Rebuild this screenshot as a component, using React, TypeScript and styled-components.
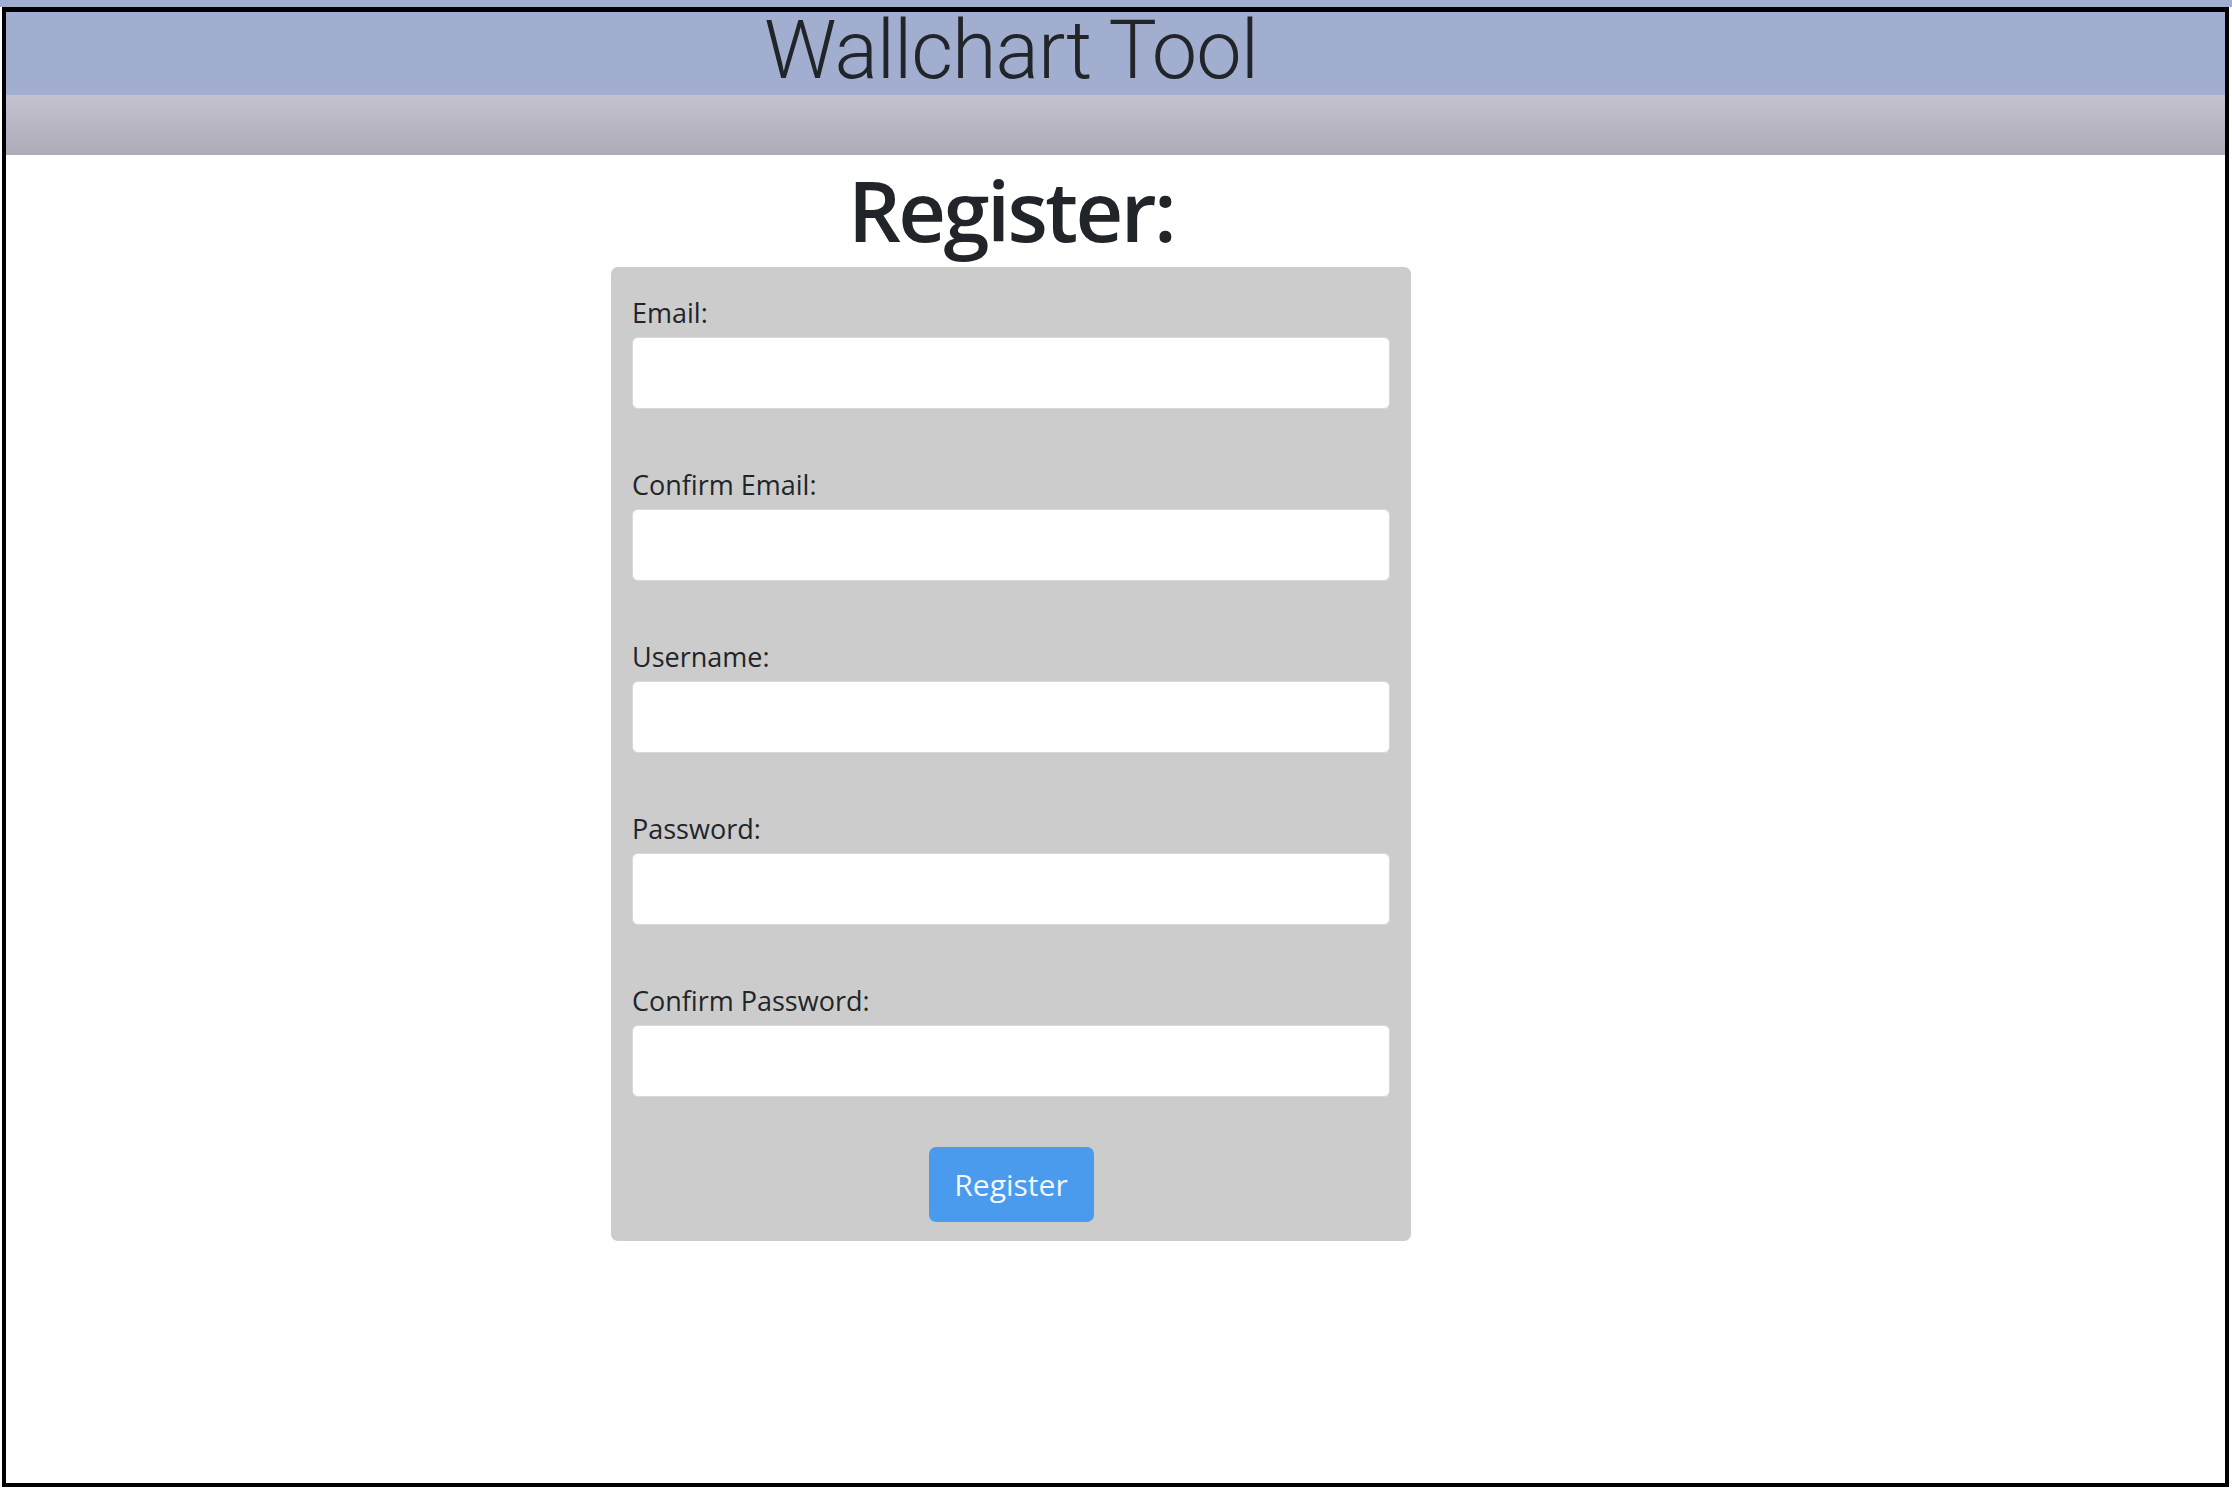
import React from "react";
import styled, { createGlobalStyle } from "styled-components";

const GlobalStyle = createGlobalStyle`
  html, body {
    margin: 0;
    padding: 0;
    background: #ffffff;
  }
  body {
    font-family: "Open Sans", "Noto Sans", "Liberation Sans", sans-serif;
    color: #212529;
  }
`;

const TopStrip = styled.div`
  height: 7px;
  background: #a1aed0;
`;

const Frame = styled.div`
  box-sizing: border-box;
  height: 1480px;
  margin: 0 3px 0 2px;
  border: 4px solid #000;
  border-top-width: 5px;
  display: flex;
  flex-direction: column;
`;

const HeaderBand = styled.header`
  box-sizing: border-box;
  height: 83px;
  background: #a1aed0;
  display: flex;
  justify-content: center;
  align-items: flex-start;
  padding: 0 209px 0 0;
`;

const Title = styled.h1`
  margin: 0;
  font-family: Roboto, "Open Sans", sans-serif;
  font-size: 81px;
  line-height: 77px;
  font-weight: 300;
  letter-spacing: -1px;
  color: #212529;
  white-space: nowrap;
`;

const HeaderShade = styled.div`
  height: 60px;
  background: linear-gradient(#c4c2cf, #adabb7);
`;

const Main = styled.main`
  display: flex;
  flex-direction: column;
  align-items: center;
  padding-right: 209px;
`;

const Heading = styled.h2`
  margin: 5px 0 6px;
  font-size: 83px;
  line-height: 100.8px;
  font-weight: 600;
  letter-spacing: -2.6px;
  color: #212529;
`;

const Card = styled.form`
  box-sizing: border-box;
  width: 800px;
  padding: 25px 21px 19px;
  background: #cccccc;
  border-radius: 7px;
  display: flex;
  flex-direction: column;
`;

const Field = styled.div`
  display: flex;
  flex-direction: column;
  & + & {
    margin-top: 55px;
  }
`;

const Label = styled.label`
  font-size: 27px;
  line-height: 42px;
  color: #212529;
  margin-bottom: 3px;
`;

const Input = styled.input`
  box-sizing: border-box;
  width: 100%;
  height: 72px;
  border: 1px solid #d6d9de;
  border-radius: 6px;
  background: #ffffff;
  padding: 0 16px;
  font-size: 24px;
  outline: none;
`;

const SubmitButton = styled.button`
  align-self: center;
  margin-top: 50px;
  width: 165px;
  height: 75px;
  border: none;
  border-radius: 7px;
  background: #4a9aee;
  color: #f4f7fb;
  font-family: "Open Sans", "Noto Sans", sans-serif;
  font-size: 30px;
  cursor: pointer;
`;

const fields = [
  { id: "email", label: "Email:", type: "email" },
  { id: "confirmEmail", label: "Confirm Email:", type: "email" },
  { id: "username", label: "Username:", type: "text" },
  { id: "password", label: "Password:", type: "password" },
  { id: "confirmPassword", label: "Confirm Password:", type: "password" },
];

export default function App() {
  return (
    <>
      <GlobalStyle />
      <TopStrip />
      <Frame>
        <HeaderBand>
          <Title>Wallchart Tool</Title>
        </HeaderBand>
        <HeaderShade />
        <Main>
          <Heading>Register:</Heading>
          <Card onSubmit={(e) => e.preventDefault()}>
            {fields.map((f) => (
              <Field key={f.id}>
                <Label htmlFor={f.id}>{f.label}</Label>
                <Input id={f.id} type={f.type} />
              </Field>
            ))}
            <SubmitButton type="submit">Register</SubmitButton>
          </Card>
        </Main>
      </Frame>
    </>
  );
}
